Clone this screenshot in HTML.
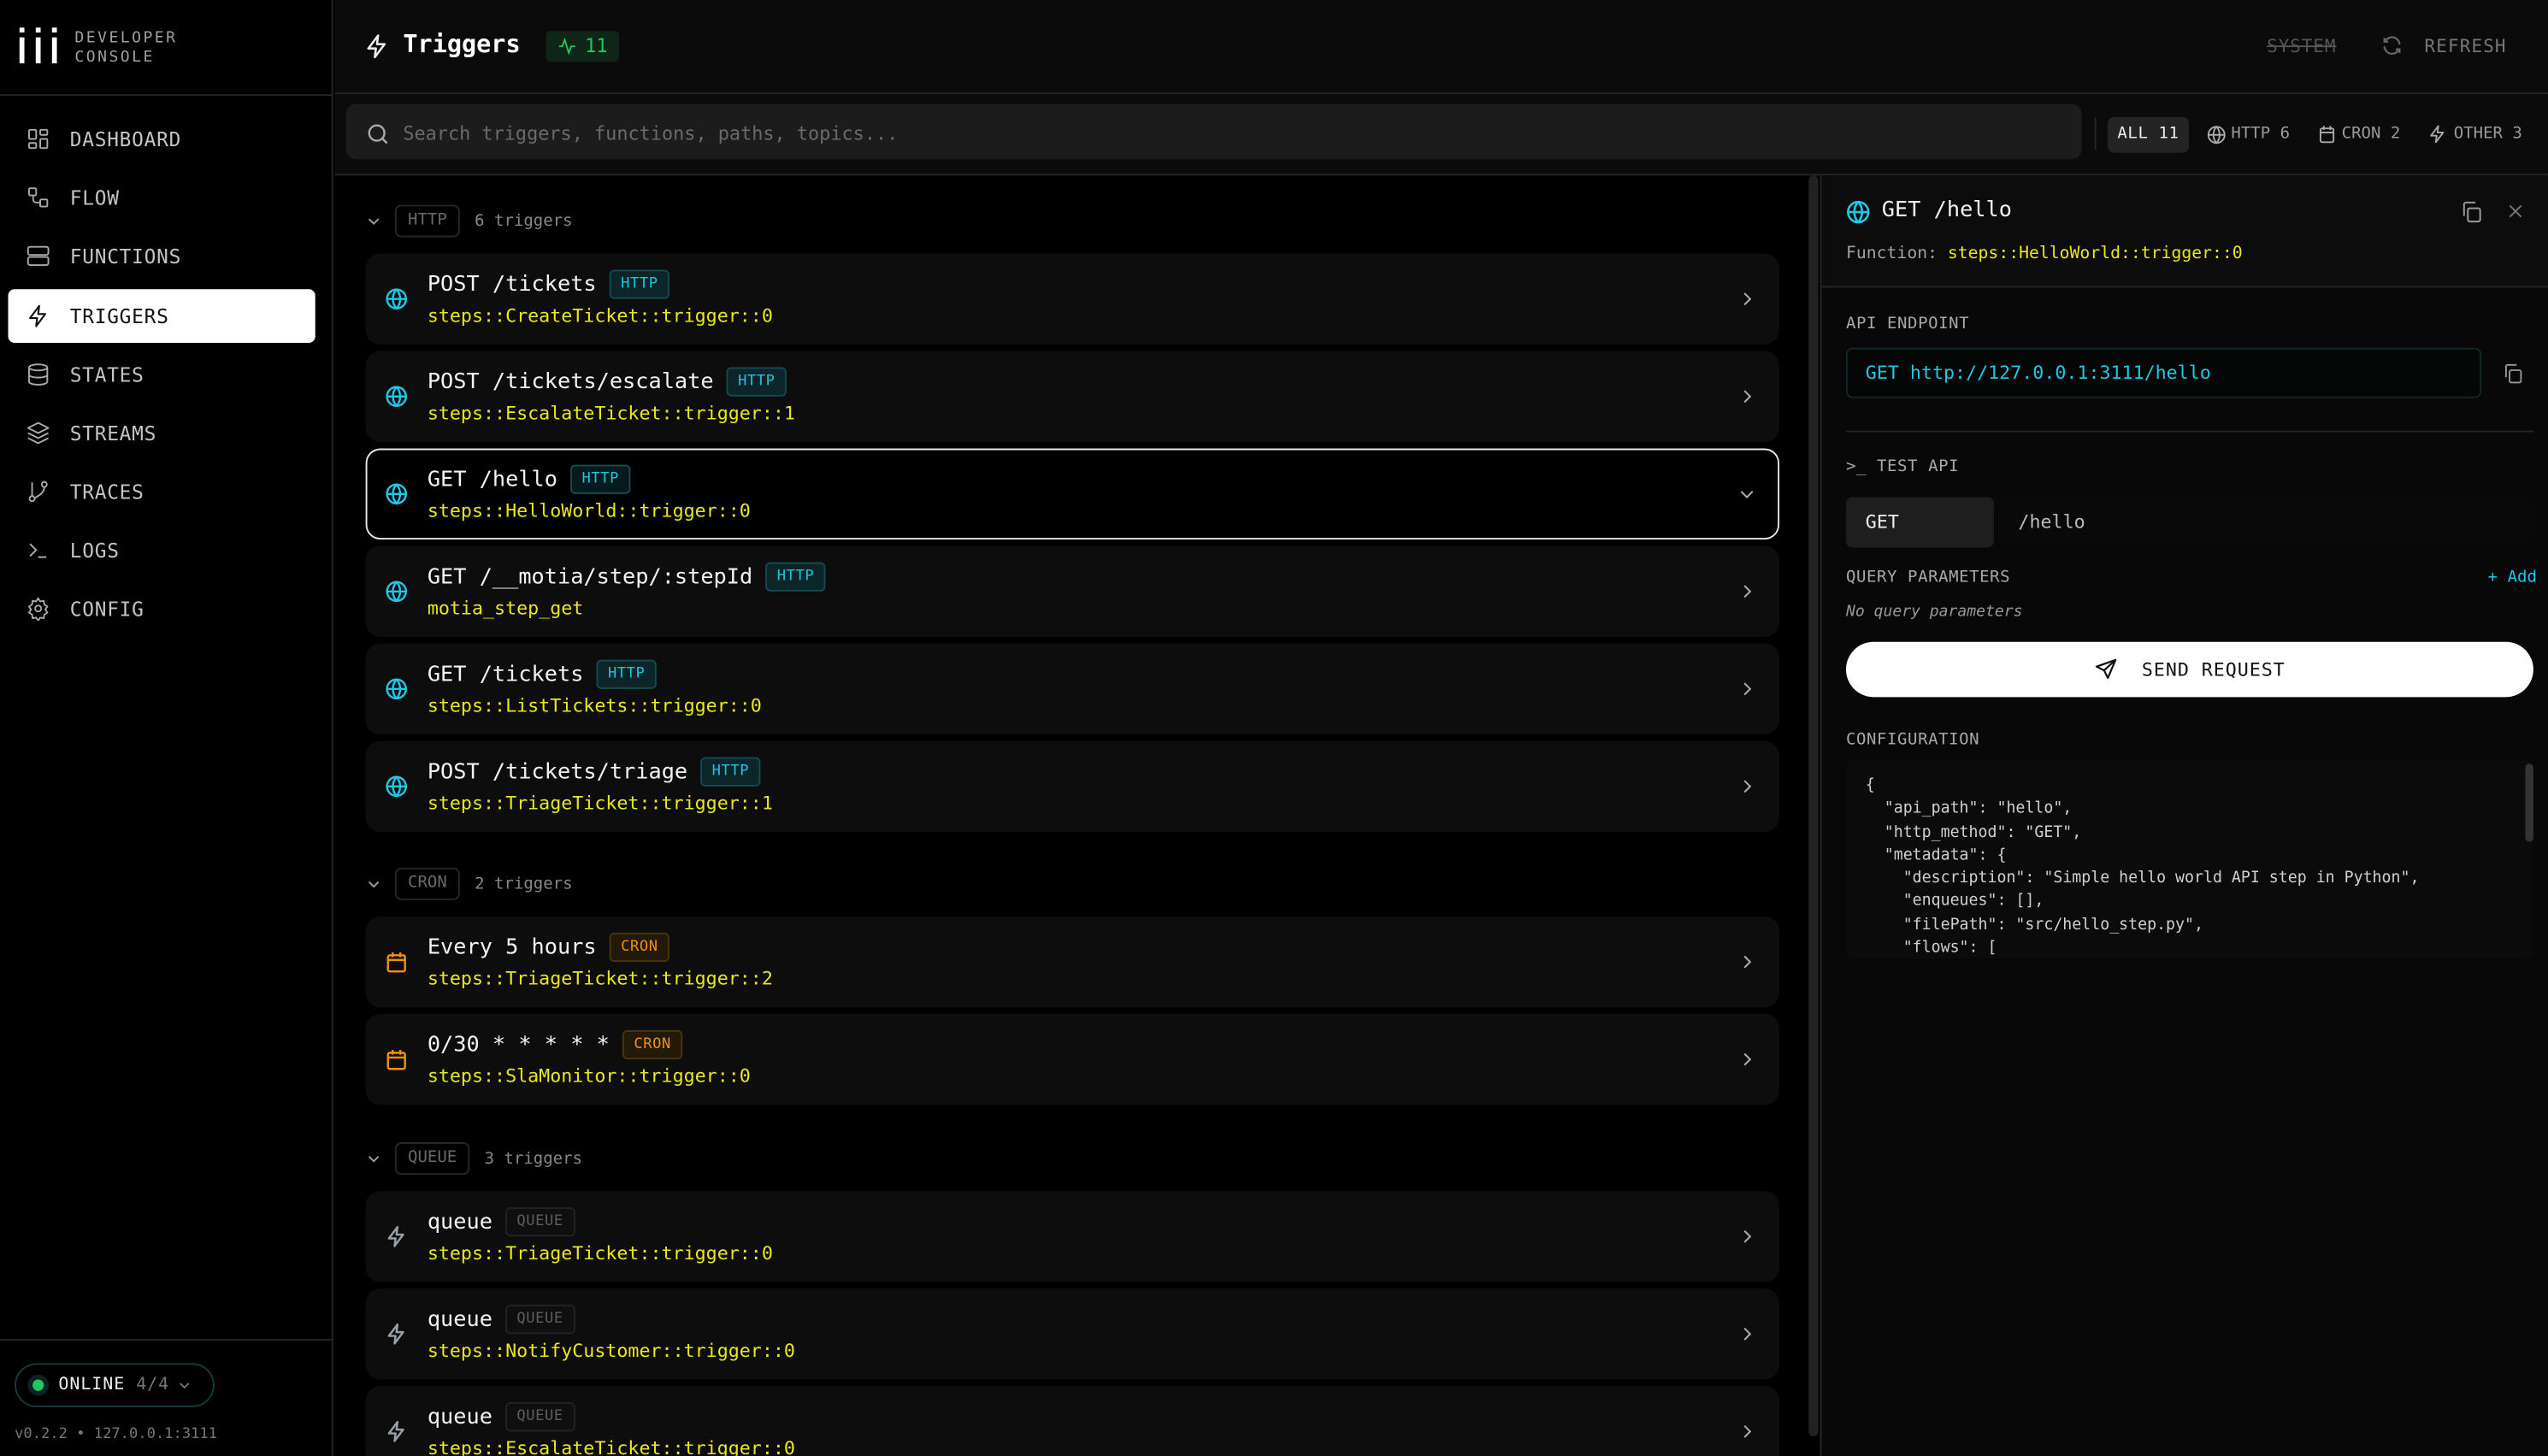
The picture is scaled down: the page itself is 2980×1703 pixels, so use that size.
<!DOCTYPE html>
<html><head><meta charset="utf-8">
<style>
*{box-sizing:border-box;margin:0;padding:0}
html,body{width:2980px;height:1702px;overflow:hidden;background:#000}
#root{position:absolute;left:0;top:0;width:1568px;height:896px;overflow:hidden;transform:scale(1.90051);transform-origin:0 0;background:#000;font-family:"DejaVu Sans Mono","Liberation Mono",monospace;color:#e5e5e5}
.a{position:absolute}
.side{left:0;top:0;width:205px;height:896px;background:#000;border-right:1px solid #262626}
.nav{position:absolute;left:5px;width:189px;height:33px;display:flex;align-items:center;font-size:12px;letter-spacing:.4px;color:#c4c4c4}
.nav svg{position:absolute;left:11px;width:15px;height:15px}
.nav span{position:absolute;left:38px}
.nav.act{background:#fff;color:#111;border-radius:4px}
.hdr{left:206px;top:0;width:1362px;height:58px;background:#0b0b0b;border-bottom:1px solid #262626}
.bar{left:206px;top:58px;width:1362px;height:50px;background:#0b0b0b;border-bottom:1px solid #262626}
.card{position:absolute;left:225px;width:870px;height:56px;background:#0d0d0d;border-radius:9px}
.card .ic{position:absolute;left:12px;top:21px;width:14px;height:14px}
.card .t{position:absolute;left:38px;top:10px;font-size:13.3px;color:#f2f2f2;white-space:pre;display:flex;align-items:center}
.card .s{position:absolute;left:38px;top:31px;font-size:11.4px;color:#e8e81a;white-space:pre}
.card .ch{position:absolute;right:14px;top:22px;width:12px;height:12px}
.bd{display:inline-block;font-size:9px;height:18px;line-height:16px;padding:0 6px;border-radius:3px;margin-left:8px;letter-spacing:.3px}
.bh{color:#22c3dd;background:#0b2529;border:1px solid #154a52}
.bc{color:#f0900e;background:#221908;border:1px solid #4a3510}
.bq{color:#5e5e5e;background:#0f0f0f;border:1px solid #232323}
.grp{position:absolute;left:225px;height:20px;font-size:10px;color:#888;display:flex;align-items:center}
.grp .chip{border:1px solid #262626;border-radius:4px;padding:0 7px;height:20px;line-height:18px;color:#6a6a6a;margin-left:10px;margin-right:9px}
.lbl{position:absolute;font-size:10px;color:#a8a8a8;letter-spacing:.3px}
.code{font-size:9.6px;color:#d0d0d0;white-space:pre;line-height:14.3px}
</style></head><body><div id="root">

<!-- SIDEBAR -->
<div class="a side">
  <div class="a" style="left:12px;top:17px;width:26px;height:22px">
    <div class="a" style="left:0;top:0;width:3px;height:3px;background:#fff"></div>
    <div class="a" style="left:0;top:6px;width:3px;height:16px;background:#fff"></div>
    <div class="a" style="left:10px;top:0;width:3px;height:3px;background:#fff"></div>
    <div class="a" style="left:10px;top:6px;width:3px;height:16px;background:#fff"></div>
    <div class="a" style="left:20px;top:0;width:3px;height:3px;background:#fff"></div>
    <div class="a" style="left:20px;top:6px;width:3px;height:16px;background:#fff"></div>
  </div>
  <div class="a" style="left:46px;top:18px;font-size:9.5px;letter-spacing:1.3px;color:#a0a0a0;line-height:12px">DEVELOPER<br>CONSOLE</div>
  <div class="a" style="left:0;top:58px;width:205px;height:1px;background:#262626"></div>

  <div class="nav" style="top:69px"><svg viewBox="0 0 24 24" fill="none" stroke="#aaa" stroke-width="1.6"><rect x="3" y="3" width="7" height="9" rx="1"/><rect x="14" y="3" width="7" height="5" rx="1"/><rect x="14" y="12" width="7" height="9" rx="1"/><rect x="3" y="16" width="7" height="5" rx="1"/></svg><span>DASHBOARD</span></div>
  <div class="nav" style="top:105px"><svg viewBox="0 0 24 24" fill="none" stroke="#aaa" stroke-width="1.6"><rect x="3" y="3" width="7" height="7" rx="1"/><rect x="14" y="14" width="7" height="7" rx="1"/><path d="M7 10v4a3 3 0 0 0 3 3h4"/></svg><span>FLOW</span></div>
  <div class="nav" style="top:141px"><svg viewBox="0 0 24 24" fill="none" stroke="#aaa" stroke-width="1.6"><rect x="2" y="3" width="20" height="8" rx="2"/><rect x="2" y="13" width="20" height="8" rx="2"/><path d="M6 7h.01M6 17h.01"/></svg><span>FUNCTIONS</span></div>
  <div class="nav act" style="top:178px"><svg viewBox="0 0 24 24" fill="none" stroke="#111" stroke-width="1.8" stroke-linejoin="round"><path d="M13 2 4 14h7l-1 8 9-12h-7z"/></svg><span>TRIGGERS</span></div>
  <div class="nav" style="top:214px"><svg viewBox="0 0 24 24" fill="none" stroke="#aaa" stroke-width="1.6"><ellipse cx="12" cy="5" rx="9" ry="3"/><path d="M3 5v14c0 1.7 4 3 9 3s9-1.3 9-3V5"/><path d="M3 12c0 1.7 4 3 9 3s9-1.3 9-3"/></svg><span>STATES</span></div>
  <div class="nav" style="top:250px"><svg viewBox="0 0 24 24" fill="none" stroke="#aaa" stroke-width="1.6" stroke-linejoin="round"><path d="m12 2 10 5-10 5L2 7z"/><path d="m2 12 10 5 10-5"/><path d="m2 17 10 5 10-5"/></svg><span>STREAMS</span></div>
  <div class="nav" style="top:286px"><svg viewBox="0 0 24 24" fill="none" stroke="#aaa" stroke-width="1.6"><circle cx="6" cy="19" r="2.5"/><circle cx="18" cy="5" r="2.5"/><path d="M6 3v13.5M18 7.5c0 6-6 9-9.5 11"/></svg><span>TRACES</span></div>
  <div class="nav" style="top:322px"><svg viewBox="0 0 24 24" fill="none" stroke="#aaa" stroke-width="1.6"><path d="m4 6 6 6-6 6M12 19h8"/></svg><span>LOGS</span></div>
  <div class="nav" style="top:358px"><svg viewBox="0 0 24 24" fill="none" stroke="#aaa" stroke-width="1.6"><circle cx="12" cy="12" r="3"/><path d="M12 2l2 3 3.5-.5.5 3.5 3 2-2 3 2 3-3 2-.5 3.5L14 21l-2 3-2-3-3.5.5L6 18l-3-2 2-3-2-3 3-2 .5-3.5L10 5z"/></svg><span>CONFIG</span></div>

  <div class="a" style="left:0;top:824px;width:205px;height:1px;background:#262626"></div>
  <div class="a" style="left:9px;top:839px;width:123px;height:27px;border:1px solid #173a3a;border-radius:14px"></div>
  <div class="a" style="left:17px;top:846px;width:13px;height:13px;border-radius:50%;background:#0c2222"></div>
  <div class="a" style="left:20px;top:849px;width:7px;height:7px;border-radius:50%;background:#22c55e"></div>
  <div class="a" style="left:36px;top:846px;font-size:10.5px;color:#eee;letter-spacing:.5px">ONLINE <span style="color:#777">4/4</span></div>
  <svg class="a" style="left:109px;top:848px;width:9px;height:9px" viewBox="0 0 24 24" fill="none" stroke="#777" stroke-width="2.5"><path d="m5 9 7 7 7-7"/></svg>
  <div class="a" style="left:9px;top:878px;font-size:9px;color:#777">v0.2.2 • 127.0.0.1:3111</div>
</div>

<!-- HEADER -->
<div class="a hdr">
  <svg class="a" style="left:18px;top:20px;width:16px;height:17px" viewBox="0 0 24 24" fill="none" stroke="#eee" stroke-width="2" stroke-linejoin="round"><path d="M13 2 4 14h7l-1 8 9-12h-7z"/></svg>
  <div class="a" style="left:42px;top:18px;font-size:15px;font-weight:bold;color:#fff">Triggers</div>
  <div class="a" style="left:130px;top:19px;width:45px;height:19px;background:#0e2518;border-radius:3px;font-size:11.5px;color:#22c55e;line-height:19px;padding-left:24px">11</div>
  <svg class="a" style="left:137px;top:22px;width:12px;height:13px" viewBox="0 0 24 24" fill="none" stroke="#22c55e" stroke-width="2"><path d="M2 12h4l3-8 5 16 3-8h5"/></svg>
  <div class="a" style="left:1189px;top:22px;font-size:11px;color:#555;text-decoration:line-through;letter-spacing:.5px">SYSTEM</div>
  <svg class="a" style="left:1259px;top:21px;width:14px;height:14px" viewBox="0 0 24 24" fill="none" stroke="#666" stroke-width="2"><path d="M20 11a8 8 0 0 0-14-5l-2 2M4 13a8 8 0 0 0 14 5l2-2M4 4v4h4M20 20v-4h-4"/></svg>
  <div class="a" style="left:1286px;top:22px;font-size:11px;color:#777;letter-spacing:.6px">REFRESH</div>
</div>

<!-- SEARCH BAR -->
<div class="a bar">
  <div class="a" style="left:7px;top:6px;width:1068px;height:34px;background:#1c1c1c;border-radius:6px"></div>
  <svg class="a" style="left:19px;top:17px;width:15px;height:15px" viewBox="0 0 24 24" fill="none" stroke="#aaa" stroke-width="2"><circle cx="11" cy="11" r="7.5"/><path d="m21 21-4.5-4.5"/></svg>
  <div class="a" style="left:42px;top:17px;font-size:11.5px;color:#6a6a6a">Search triggers, functions, paths, topics...</div>
  <div class="a" style="left:1083px;top:14px;width:1px;height:20px;background:#262626"></div>
  <div class="a" style="left:1091px;top:14px;width:50px;height:22px;background:#242424;border-radius:4px;font-size:10px;color:#eee;line-height:22px;text-align:center;letter-spacing:.3px">ALL 11</div>
  <svg class="a" style="left:1152px;top:19px;width:12px;height:12px" viewBox="0 0 24 24" fill="none" stroke="#aaa" stroke-width="2"><circle cx="12" cy="12" r="10"/><path d="M2 12h20M12 2a15 15 0 0 1 0 20M12 2a15 15 0 0 0 0 20"/></svg>
  <div class="a" style="left:1167px;top:19px;font-size:10px;color:#9a9a9a">HTTP 6</div>
  <svg class="a" style="left:1220px;top:18px;width:12px;height:13px" viewBox="0 0 24 24" fill="none" stroke="#aaa" stroke-width="2"><rect x="4" y="5" width="16" height="17" rx="2"/><path d="M8 2v5M16 2v5M4 10h16"/></svg>
  <div class="a" style="left:1235px;top:19px;font-size:10px;color:#9a9a9a">CRON 2</div>
  <svg class="a" style="left:1288px;top:18px;width:12px;height:13px" viewBox="0 0 24 24" fill="none" stroke="#aaa" stroke-width="2" stroke-linejoin="round"><path d="M13 2 4 14h7l-1 8 9-12h-7z"/></svg>
  <div class="a" style="left:1304px;top:19px;font-size:10px;color:#9a9a9a">OTHER 3</div>
</div>

<!-- LIST -->
<div class="a" style="left:1113px;top:108px;width:6px;height:776px;background:#222;border-radius:3px"></div>

<div class="grp" style="top:126px"><svg style="width:10px;height:10px" viewBox="0 0 24 24" fill="none" stroke="#999" stroke-width="2.5"><path d="m5 9 7 7 7-7"/></svg><span class="chip" style="margin-left:8px">HTTP</span>6 triggers</div>

<div class="card" style="top:156px"><svg class="ic" viewBox="0 0 24 24" fill="none" stroke="#1ec8e6" stroke-width="2.2"><circle cx="12" cy="12" r="10"/><path d="M2 12h20M12 2a15 15 0 0 1 0 20M12 2a15 15 0 0 0 0 20"/></svg><div class="t">POST /tickets<span class="bd bh">HTTP</span></div><div class="s">steps::CreateTicket::trigger::0</div><svg class="ch" viewBox="0 0 24 24" fill="none" stroke="#aaa" stroke-width="2.2"><path d="m9 5 7 7-7 7"/></svg></div>
<div class="card" style="top:216px"><svg class="ic" viewBox="0 0 24 24" fill="none" stroke="#1ec8e6" stroke-width="2.2"><circle cx="12" cy="12" r="10"/><path d="M2 12h20M12 2a15 15 0 0 1 0 20M12 2a15 15 0 0 0 0 20"/></svg><div class="t">POST /tickets/escalate<span class="bd bh">HTTP</span></div><div class="s">steps::EscalateTicket::trigger::1</div><svg class="ch" viewBox="0 0 24 24" fill="none" stroke="#aaa" stroke-width="2.2"><path d="m9 5 7 7-7 7"/></svg></div>
<div class="card" style="top:276px;background:#000;border:1.5px solid #e8e8e8"><svg class="ic" style="left:11px;top:20px" viewBox="0 0 24 24" fill="none" stroke="#1ec8e6" stroke-width="2.2"><circle cx="12" cy="12" r="10"/><path d="M2 12h20M12 2a15 15 0 0 1 0 20M12 2a15 15 0 0 0 0 20"/></svg><div class="t" style="left:37px;top:9px">GET /hello<span class="bd bh" style="background:#071a1d">HTTP</span></div><div class="s" style="left:37px;top:30px">steps::HelloWorld::trigger::0</div><svg class="ch" style="top:21px;right:13px" viewBox="0 0 24 24" fill="none" stroke="#aaa" stroke-width="2.2"><path d="m5 9 7 7 7-7"/></svg></div>
<div class="card" style="top:336px"><svg class="ic" viewBox="0 0 24 24" fill="none" stroke="#1ec8e6" stroke-width="2.2"><circle cx="12" cy="12" r="10"/><path d="M2 12h20M12 2a15 15 0 0 1 0 20M12 2a15 15 0 0 0 0 20"/></svg><div class="t">GET /__motia/step/:stepId<span class="bd bh">HTTP</span></div><div class="s">motia_step_get</div><svg class="ch" viewBox="0 0 24 24" fill="none" stroke="#aaa" stroke-width="2.2"><path d="m9 5 7 7-7 7"/></svg></div>
<div class="card" style="top:396px"><svg class="ic" viewBox="0 0 24 24" fill="none" stroke="#1ec8e6" stroke-width="2.2"><circle cx="12" cy="12" r="10"/><path d="M2 12h20M12 2a15 15 0 0 1 0 20M12 2a15 15 0 0 0 0 20"/></svg><div class="t">GET /tickets<span class="bd bh">HTTP</span></div><div class="s">steps::ListTickets::trigger::0</div><svg class="ch" viewBox="0 0 24 24" fill="none" stroke="#aaa" stroke-width="2.2"><path d="m9 5 7 7-7 7"/></svg></div>
<div class="card" style="top:456px"><svg class="ic" viewBox="0 0 24 24" fill="none" stroke="#1ec8e6" stroke-width="2.2"><circle cx="12" cy="12" r="10"/><path d="M2 12h20M12 2a15 15 0 0 1 0 20M12 2a15 15 0 0 0 0 20"/></svg><div class="t">POST /tickets/triage<span class="bd bh">HTTP</span></div><div class="s">steps::TriageTicket::trigger::1</div><svg class="ch" viewBox="0 0 24 24" fill="none" stroke="#aaa" stroke-width="2.2"><path d="m9 5 7 7-7 7"/></svg></div>

<div class="grp" style="top:534px"><svg style="width:10px;height:10px" viewBox="0 0 24 24" fill="none" stroke="#999" stroke-width="2.5"><path d="m5 9 7 7 7-7"/></svg><span class="chip" style="margin-left:8px">CRON</span>2 triggers</div>

<div class="card" style="top:564px"><svg class="ic" viewBox="0 0 24 24" fill="none" stroke="#f0900e" stroke-width="2.2"><rect x="3" y="5" width="18" height="17" rx="2"/><path d="M8 2v5M16 2v5M3 10h18"/></svg><div class="t">Every 5 hours<span class="bd bc">CRON</span></div><div class="s">steps::TriageTicket::trigger::2</div><svg class="ch" viewBox="0 0 24 24" fill="none" stroke="#aaa" stroke-width="2.2"><path d="m9 5 7 7-7 7"/></svg></div>
<div class="card" style="top:624px"><svg class="ic" viewBox="0 0 24 24" fill="none" stroke="#f0900e" stroke-width="2.2"><rect x="3" y="5" width="18" height="17" rx="2"/><path d="M8 2v5M16 2v5M3 10h18"/></svg><div class="t">0/30 * * * * *<span class="bd bc">CRON</span></div><div class="s">steps::SlaMonitor::trigger::0</div><svg class="ch" viewBox="0 0 24 24" fill="none" stroke="#aaa" stroke-width="2.2"><path d="m9 5 7 7-7 7"/></svg></div>

<div class="grp" style="top:703px"><svg style="width:10px;height:10px" viewBox="0 0 24 24" fill="none" stroke="#999" stroke-width="2.5"><path d="m5 9 7 7 7-7"/></svg><span class="chip" style="margin-left:8px">QUEUE</span>3 triggers</div>

<div class="card" style="top:733px"><svg class="ic" viewBox="0 0 24 24" fill="none" stroke="#9aa0aa" stroke-width="2.2" stroke-linejoin="round"><path d="M13 2 4 14h7l-1 8 9-12h-7z"/></svg><div class="t">queue<span class="bd bq">QUEUE</span></div><div class="s">steps::TriageTicket::trigger::0</div><svg class="ch" viewBox="0 0 24 24" fill="none" stroke="#aaa" stroke-width="2.2"><path d="m9 5 7 7-7 7"/></svg></div>
<div class="card" style="top:793px"><svg class="ic" viewBox="0 0 24 24" fill="none" stroke="#9aa0aa" stroke-width="2.2" stroke-linejoin="round"><path d="M13 2 4 14h7l-1 8 9-12h-7z"/></svg><div class="t">queue<span class="bd bq">QUEUE</span></div><div class="s">steps::NotifyCustomer::trigger::0</div><svg class="ch" viewBox="0 0 24 24" fill="none" stroke="#aaa" stroke-width="2.2"><path d="m9 5 7 7-7 7"/></svg></div>
<div class="card" style="top:853px"><svg class="ic" viewBox="0 0 24 24" fill="none" stroke="#9aa0aa" stroke-width="2.2" stroke-linejoin="round"><path d="M13 2 4 14h7l-1 8 9-12h-7z"/></svg><div class="t">queue<span class="bd bq">QUEUE</span></div><div class="s">steps::EscalateTicket::trigger::0</div><svg class="ch" viewBox="0 0 24 24" fill="none" stroke="#aaa" stroke-width="2.2"><path d="m9 5 7 7-7 7"/></svg></div>

<!-- DETAIL PANEL -->
<div class="a" style="left:1120px;top:108px;width:448px;height:788px;background:#080808;border-left:1px solid #262626">
  <div class="a" style="left:0;top:0;width:448px;height:69px;background:#0c0c0c;border-bottom:1px solid #262626"></div>
  <svg class="a" style="left:15px;top:15px;width:15px;height:15px" viewBox="0 0 24 24" fill="none" stroke="#1ec8e6" stroke-width="2.2"><circle cx="12" cy="12" r="10"/><path d="M2 12h20M12 2a15 15 0 0 1 0 20M12 2a15 15 0 0 0 0 20"/></svg>
  <div class="a" style="left:37px;top:14px;font-size:13.3px;color:#f2f2f2">GET /hello</div>
  <svg class="a" style="left:393px;top:15px;width:14px;height:15px" viewBox="0 0 24 24" fill="none" stroke="#999" stroke-width="1.8"><rect x="8" y="8" width="13" height="14" rx="2"/><path d="M4 16V4a2 2 0 0 1 2-2h10"/></svg>
  <svg class="a" style="left:421px;top:16px;width:12px;height:12px" viewBox="0 0 24 24" fill="none" stroke="#777" stroke-width="2"><path d="M5 5l14 14M19 5 5 19"/></svg>
  <div class="a" style="left:15px;top:42px;font-size:10.4px;color:#a0a0a0">Function: <span style="color:#e8e81a">steps::HelloWorld::trigger::0</span></div>

  <div class="lbl" style="left:15px;top:86px">API ENDPOINT</div>
  <div class="a" style="left:15px;top:106px;width:391px;height:31px;background:#050606;border:1px solid #12282a;border-radius:4px"></div>
  <div class="a" style="left:27px;top:114px;font-size:11.4px;color:#1ec8e6">GET http://127.0.0.1:3111/hello</div>
  <svg class="a" style="left:419px;top:115px;width:13px;height:14px" viewBox="0 0 24 24" fill="none" stroke="#999" stroke-width="1.8"><rect x="8" y="8" width="13" height="14" rx="2"/><path d="M4 16V4a2 2 0 0 1 2-2h10"/></svg>
  <div class="a" style="left:15px;top:157px;width:423px;height:1px;background:#262626"></div>

  <div class="lbl" style="left:15px;top:174px;color:#a8a8a8">&gt;_ TEST API</div>
  <div class="a" style="left:15px;top:198px;width:91px;height:31px;background:#1e1e1e;border-radius:4px;font-size:11.4px;color:#eee;line-height:31px;padding-left:12px">GET</div>
  <div class="a" style="left:110px;top:198px;width:328px;height:31px;background:#090909;border-radius:4px;font-size:11.4px;color:#bbb;line-height:31px;padding-left:11px">/hello</div>

  <div class="lbl" style="left:15px;top:242px">QUERY PARAMETERS</div>
  <div class="a" style="left:410px;top:242px;font-size:10px;color:#1ec8e6">+ Add</div>
  <div class="a" style="left:15px;top:263px;font-size:9.5px;color:#999;font-style:italic">No query parameters</div>

  <div class="a" style="left:15px;top:287px;width:423px;height:34px;background:#fff;border-radius:17px"></div>
  <svg class="a" style="left:168px;top:297px;width:14px;height:14px" viewBox="0 0 24 24" fill="none" stroke="#111" stroke-width="2" stroke-linejoin="round"><path d="M22 2 2 9l8 4 4 8z"/><path d="m22 2-12 11"/></svg>
  <div class="a" style="left:197px;top:297px;font-size:11.4px;color:#111;letter-spacing:.5px">SEND REQUEST</div>

  <div class="lbl" style="left:15px;top:342px">CONFIGURATION</div>
  <div class="a" style="left:15px;top:360px;width:423px;height:122px;background:#0b0b0b;border-radius:4px"></div>
  <div class="a" style="left:433px;top:362px;width:5px;height:48px;background:#333;border-radius:3px"></div>
  <div class="a code" style="left:27px;top:369px">{
  "api_path": "hello",
  "http_method": "GET",
  "metadata": {
    "description": "Simple hello world API step in Python",
    "enqueues": [],
    "filePath": "src/hello_step.py",
    "flows": [</div>
</div>

</div></body></html>
